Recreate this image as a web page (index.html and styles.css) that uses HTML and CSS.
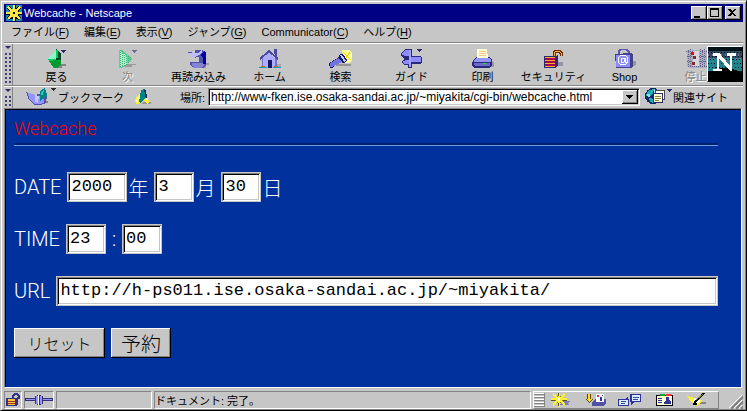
FILE: index.html
```
<!DOCTYPE html>
<html lang="ja">
<head>
  <meta charset="UTF-8">
  <title>Webcache - Netscape</title>
  <link rel="stylesheet" href="styles.css">
</head>
<body>
  <div class="window">
    <header class="titlebar">
      <svg class="app-icon" width="16" height="16" viewBox="0 0 16 16">
        <path fill="#188ca8" d="M0 0h16v16H0z"/>
        <path fill="#000" d="M5 5h8v9H4z"/>
        <path stroke="#000" stroke-width="3" d="M8 0v16M0 8h16M2 2l12 12M14 2L2 14"/>
        <path stroke="#ffe742" stroke-width="2" d="M8 0v16M0 8h16M2 2l12 12M14 2L2 14"/>
        <circle cx="8" cy="8" r="4" fill="none" stroke="#ffe742" stroke-width="1"/>
        <path fill="#000" d="M7 7h2v2H7z"/>
      </svg>
      <h1>Webcache - Netscape</h1>
      <div class="window-buttons">
        <button aria-label="最小化"><svg width="12" height="10"><path fill="#000" d="M2 8h6v2H2z"/></svg></button>
        <button aria-label="最大化"><svg width="12" height="10"><path d="M2 0h9v9H2zM3 2v6h7V2z" fill="#000" fill-rule="evenodd"/></svg></button>
        <button class="close" aria-label="閉じる"><svg width="12" height="10"><path fill="#000" d="M2 1h2l2 2 2-2h2L7 4.500l3 3.500H8L6 6 4 8H2l3-3.500z"/></svg></button>
      </div>
    </header>

    <nav class="menubar">
      <a href="#">ファイル(<u>F</u>)</a>
      <a href="#">編集(<u>E</u>)</a>
      <a href="#">表示(<u>V</u>)</a>
      <a href="#">ジャンプ(<u>G</u>)</a>
      <a href="#">Communicator(<u>C</u>)</a>
      <a href="#">ヘルプ(<u>H</u>)</a>
    </nav>

    <div class="toolbar">
      <div class="handle"></div>
      <div class="tools">
        <button class="tool">
          <svg viewBox="0 0 24 20">
            <path fill="#848484" d="M8 15h13v2H17v2H8z"/>
            <path fill="#00ce63" d="M11 1L2 10l9 9z"/>
            <path fill="#8cf7c6" d="M11 1L2 10h9z"/>
            <path fill="#004a29" d="M11 0l5 4v11l-5 4z"/>
            <path fill="#009c31" d="M12 11h4v4l-4 4H9l-5-7z"/>
            <path fill="#00ce63" d="M11 1h2v8h-2z"/>
            <path fill="#29296b" d="M16 1h5l-2 3h-1z"/>
          </svg>
          戻る
        </button>
        <button class="tool off">
          <svg viewBox="0 0 24 20">
            <path fill="#9c9c9c" d="M7 15h13v1h-4v2H7z"/>
            <path fill="#63ce9c" d="M3 1h3l11 9-11 9H3z"/>
            <path fill="#bde7ce" d="M4 2l7 5v9l-7 2z"/>
            <path stroke="#31b573" stroke-dasharray="1 1" fill="none" d="M4.500 1v18M6.500 2v16M8.500 4v13M10.500 5v11M12.500 7v7M14.500 8v4"/>
            <path fill="#6b6b94" d="M16 1h5l-2 3h-1z"/>
          </svg>
          次
        </button>
        <button class="tool">
          <svg viewBox="0 0 24 20">
            <path fill="#9c9ca5" d="M6 14h16v2h-3v3H6z"/>
            <path fill="#5252ad" d="M8 1h7l4 3v12l-3 3H6l-3-3v-3h9V8L6 9 1 3l7 1z"/>
            <path fill="#bdbdff" d="M1 4h10l4-3v3L7 9z"/>
            <path fill="#8484d6" d="M5 14h10l2 2-2 3H6z"/>
            <path fill="#0000a5" d="M13 6l4-4 2 2v11h-3V8z"/>
          </svg>
          再読み込み
        </button>
        <button class="tool">
          <svg viewBox="0 0 24 20">
            <path fill="#a5a5ad" d="M17 15h6v4h-8z"/>
            <path fill="#7373bd" d="M4 9h15v10H4z"/>
            <path fill="#adadff" d="M5 8l5-5 7 7v9H5z"/>
            <path fill="none" stroke="#4a4aa5" stroke-width="2" d="M2 10l9-8 9 8"/>
            <path fill="#4a4aa5" d="M16 0h3v8l-3-3z"/>
            <path fill="#18186b" d="M10 11h4v8h-4z"/>
            <path fill="#00a5ad" d="M1 18h8v1H1zM15 18h8v1h-8z"/>
            <path fill="#d65a29" d="M3 17h4v1H3zM16 17h4v1h-4z"/>
          </svg>
          ホーム
        </button>
        <button class="tool">
          <svg viewBox="0 0 24 20">
            <path fill="#ffff9c" d="M13 1h8l2 3v7l-3 3h-5z"/>
            <path stroke="#f7d600" d="M14 3l8 8M21 3l-6 9"/>
            <path fill="#949494" d="M8 15h14v2H6z"/>
            <path fill="#18186b" d="M0 14l9-5 2-4h3l4 6-2 3-6-1-7 6H1z"/>
            <path fill="#7373de" d="M1 14l9-5 3 4-10 5H1z"/>
            <path fill="#c6c6ff" d="M11 6h2l4 6-2 1z"/>
          </svg>
          検索
        </button>
        <button class="tool">
          <svg viewBox="0 0 24 20">
            <path fill="#29297b" d="M1 4l5-4h5v10H5L1 7zM9 0h3v19H8zM9 7h12l1 2v5l-2 1H9zM1 13l4-3h4v6H5z"/>
            <path fill="#8c8cff" d="M2 4l4-3h4v6H5L2 6zM11 8h10v5H11zM2 13l4-2h3v4H5z"/>
            <path fill="#a5a5ff" d="M9 1h2v17H9z"/>
            <path fill="#29296b" d="M17 0h5l-2 3h-1z"/>
          </svg>
          ガイド
        </button>
        <button class="tool">
          <svg viewBox="0 0 24 20">
            <path fill="#9494a5" d="M17 13h6v5H7z"/>
            <path fill="#29297b" d="M2 11l3-3h13l3 3v5l-3 3H3l-2-3z"/>
            <path fill="#9494ff" d="M3 11l2-2h13l2 2v2H3z"/>
            <path fill="#6b6bc6" d="M3 14h16v3H4z"/>
            <path fill="#ffffd6" d="M6 0h10l1 9H6z"/>
            <path stroke="#f7c68c" d="M8 2.500h7M8 4.500h7M8 6.500h7"/>
            <path fill="#00ff00" d="M12 14h3v1h-3z"/>
          </svg>
          印刷
        </button>
        <button class="tool">
          <svg viewBox="0 0 24 20">
            <path fill="#9494a5" d="M14 13h7v4H8z"/>
            <path fill="none" stroke="#732900" stroke-width="3" d="M12 8V4l2-2h3l2 2v3"/>
            <path fill="none" stroke="#f7b531" d="M12 8V4l2-2h3l2 2v3"/>
            <path fill="#29297b" d="M2 7h11l3-1v11l-3 2H2z"/>
            <path fill="#ffad21" d="M3 8h10v10H3z"/>
            <path fill="#a50052" d="M3 9h10v2H3zM3 12h10v2H3zM3 15h10v2H3z"/>
          </svg>
          セキュリティ
        </button>
        <button class="tool">
          <svg viewBox="0 0 24 20">
            <path fill="#9494a5" d="M18 12h5v4l-4 2H8z"/>
            <path fill="none" stroke="#5a5aad" stroke-width="2" d="M6 5V2l2-2h5l3 3v3"/>
            <path fill="#42428c" d="M2 5l15-1 3 1v13l-3 1H3z"/>
            <path fill="#8c8cff" d="M3 6h14v12H3z"/>
            <circle cx="10" cy="11" r="5" fill="none" stroke="#fff" stroke-width="1"/>
            <path fill="none" stroke="#fff" d="M12 9H9L8 11v2h3l1-4v4h2"/>
          </svg>
          Shop
        </button>
        <button class="tool off">
          <svg viewBox="0 0 24 20">
            <path fill="#adadbd" d="M3 1h20v18H5L3 16z"/>
            <path fill="none" stroke="#63638c" stroke-dasharray="1 1" d="M4.500 1v18M6.500 0v18M16.500 0v18M18.500 1v18M20.500 0v18"/>
            <path stroke="#63638c" stroke-dasharray="1 1" d="M2 2.500h21M3 7.500h20M3 12.500h20M4 17.500h19"/>
            <path fill="#d6d6de" d="M9 2h6v15H9z"/>
            <path fill="#ff0000" d="M7 3h3v3H7z"/>
            <path fill="#842929" d="M9 7h3v3H9zM8 13h3v3H8z"/>
          </svg>
          停止
        </button>
      </div>
      <svg class="logo" viewBox="0 0 32 32">
        <path fill="#001018" d="M0 0h32v32H0z"/>
        <path fill="#314a63" d="M0 4h32v8H0z"/>
        <path fill="#21848c" d="M0 10h32v13H0z"/>
        <path stroke="#001018" stroke-dasharray="1 2" d="M0 2.500h32M0 5.500h32M1 8.500h31M2 11.500h30M0 15.500h32M1 19.500h31"/>
        <path stroke="#8c6b8c" stroke-dasharray="1 3" d="M0 7.500h32M2 10.500h30M1 13.500h31"/>
        <path fill="#000" d="M0 32v-8l7-2 5-2h9l6 2 5 3v7z"/>
        <path fill="#fff" d="M5 6h6l10 12V8h-3V6h8v2h-3v15h-2L10 10v11h3v2H5v-2h3V8H5z"/>
      </svg>
    </div>

    <div class="toolbar location">
      <div class="handle"></div>
      <button class="quick bookmarks">
        <svg width="32" height="18" viewBox="0 0 32 18">
          <path fill="#848484" d="M10 13h12v2h-6v2h-6z"/>
          <path fill="#5252ad" d="M0 4l9 3 9-3 3 4-1 7-6 2H9L3 12z"/>
          <path fill="#9494ff" d="M1 4l8 3 4 1 5 3v4l-5 1H9L4 12z"/>
          <path fill="#c6c6ff" d="M9 7l4 1-1 7-3-1z"/>
          <path fill="#008484" d="M14 3l5-3 1 3 1 4-4 4-3 2z"/>
          <path fill="#31c6c6" d="M15 4l3-2-2 7z"/>
          <path fill="#292929" d="M25 0h5l-2 3h-1z"/>
        </svg>
        ブックマーク
      </button>
      <svg class="drag" width="18" height="16" viewBox="0 0 18 16">
        <path fill="#949494" d="M9 13h8v2H8z"/>
        <path fill="#ffef31" d="M1 11l3-5 6-5 4 9 2 3-3 2-5-5-3 5H2z"/>
        <path fill="#008484" d="M7 1l4-1 1 8-5 6-2-1z"/>
        <path fill="#ffffc6" d="M3 10l3-4-2 7H2zM11 6l3 5-1 1z"/>
        <path fill="#00296b" d="M10 1h2l1 7-1 2z"/>
      </svg>
      <label for="address">場所:</label>
      <div class="combo">
        <input id="address" type="text" value="http://www-fken.ise.osaka-sandai.ac.jp/~miyakita/cgi-bin/webcache.html">
        <button aria-label="履歴"><svg width="8" height="4"><path fill="#000" d="M0 0h7L4 4H3z"/></svg></button>
      </div>
      <button class="quick related">
        <svg width="28" height="18" viewBox="0 0 28 18">
          <circle cx="8" cy="8" r="8" fill="#10296b"/>
          <path fill="#21adb5" d="M4 2l5-1-1 4-4 4-3-1 1-4zM4 10l5 1-1 4-3-1z"/>
          <path fill="#94deef" d="M9 1l4 2-4 2zM2 6h3v3H3z"/>
          <path fill="#fff" stroke="#4a4a4a" d="M10.500 2.500h9v9h-9z"/>
          <path fill="#ffffce" stroke="#29296b" d="M8.500 5.500h9v9h-9z"/>
          <path fill="#84844a" d="M10 8h6v1h-6zM10 10h6v1h-6zM10 12h4v1h-4z"/>
          <path fill="#29296b" d="M22 1h5l-2 3h-1z"/>
        </svg>
        関連サイト
      </button>
    </div>

    <main class="page">
      <h2>Webcache</h2>
      <hr>
      <form>
        <div class="row">
          <label for="year">DATE</label>
          <input class="year" id="year" type="text" value="2000"><label for="year">年</label>
          <input class="two" id="month" type="text" value="3"><label for="month">月</label>
          <input class="two" id="day" type="text" value="30"><label for="day">日</label>
        </div>
        <div class="row">
          <label for="hour">TIME</label>
          <input class="two" id="hour" type="text" value="23">
          <label class="colon" for="minute">:</label>
          <input class="two" id="minute" type="text" value="00">
        </div>
        <div class="row">
          <label for="url">URL</label>
          <input class="url" id="url" type="text" value="http://h-ps011.ise.osaka-sandai.ac.jp/~miyakita/">
        </div>
        <div class="row">
          <button class="reset" type="reset">リセット</button>
          <button class="reserve" type="button">予約</button>
        </div>
      </form>
    </main>

    <footer class="statusbar">
      <div class="cell lock">
        <svg width="16" height="14" viewBox="0 0 16 14">
          <path fill="none" stroke="#31318c" stroke-width="2" d="M8 5V3l2-2h2l2 2v3"/>
          <path fill="#31318c" d="M1 5h10l2-1v8l-2 1H1z"/>
          <path fill="#ffc631" d="M3 6h7v6H3z"/>
          <path fill="#a53131" d="M3 8h7v1H3zM3 10h7v1H3z"/>
        </svg>
      </div>
      <div class="cell plug">
        <svg width="28" height="12" viewBox="0 0 28 12">
          <path fill="#31317b" d="M0 4h10v3H0zM18 4h10v3H18zM10 2h2V1h4v1h2v8h-2v1h-4v-1h-2z"/>
          <path fill="#9494ff" d="M1 5h9v1H1zM18 5h9v1h-9zM11 2h2v8h-2zM15 2h2v8h-2z"/>
          <path fill="#fff" d="M13 1h1v10h-1z"/>
        </svg>
      </div>
      <div class="cell progress"></div>
      <div class="cell message">ドキュメント: 完了。</div>
      <div class="components">
        <div class="lines"></div>
        <button aria-label="Navigator">
          <svg width="24" height="14" viewBox="0 0 24 14">
            <path fill="#7b7bc6" d="M12 8h9l-3 2 1 2h-9z"/>
            <path fill="none" stroke="#84841a" d="M5.500 3.500h7v6h-7z"/>
            <path stroke="#ffef31" stroke-width="2" d="M9 0v14M1 6h16M3 1l12 11M15 1L3 12"/>
            <path fill="#5a5a00" d="M8 0h1v3H8zM1 7h4v1H1zM13 7h4v1h-4zM8 10h1v3H8z"/>
            <path fill="#fff" d="M8 5h2v3H8z"/>
          </svg>
        </button>
        <button aria-label="受信箱">
          <svg width="24" height="14" viewBox="0 0 24 14">
            <path fill="#5a4a00" d="M3 1h4v5h2L5 10 1 6h2z"/>
            <path fill="#ffde21" d="M4 1h2v5h2L5 9 2 6h2z"/>
            <path fill="#5252a5" d="M8 9l4-3h10v5l-3 2H8z"/>
            <path fill="#fff" d="M12 1h8v8h-8z"/>
            <path fill="#d63131" d="M13 2h2v2h-2z"/>
            <path fill="#3131a5" d="M16 4h2v4h-2zM18 2h1v1h-1z"/>
          </svg>
        </button>
        <button aria-label="ニュース">
          <svg width="24" height="14" viewBox="0 0 24 14">
            <path fill="#31319c" d="M12 1h11v8h-7l-3 3V9h-1zM0 6h7l3-3v3h1v7H0z"/>
            <path fill="#d6efff" d="M14 2h8v6h-8zM1 7h9v5H1z"/>
            <path fill="#4242a5" d="M15 4h6v1h-6zM15 6h5v1h-5zM3 8h5v1H3zM3 10h4v1H3z"/>
          </svg>
        </button>
        <button aria-label="アドレス帳">
          <svg width="24" height="14" viewBox="0 0 24 14">
            <path fill="#000" d="M4 2h17v11H4z"/>
            <path fill="#ffffd6" d="M5 3h15v9H5z"/>
            <path fill="#00a531" d="M8 1h5v2H8z"/>
            <path fill="#ff3131" d="M14 1h5v2h-5z"/>
            <path fill="#31319c" d="M14 4h3v3h-3zM12 9l2-2h3l2 2v2h-7zM6 5h4v1H6zM6 7h4v1H6zM6 9h4v1H6z"/>
          </svg>
        </button>
        <button aria-label="コンポーザ">
          <svg width="24" height="14" viewBox="0 0 24 14">
            <path fill="#848484" d="M14 9h6v2h-7z"/>
            <path fill="#ffef31" d="M1 3l8 2 8 3-6 5-6-4z"/>
            <path fill="#fff" d="M8 5l7 3-4 3-4-2z"/>
            <path stroke="#000" stroke-width="2" d="M8 10L18 0M7 11h4"/>
            <path stroke="#8c9431" d="M10 7l7-6"/>
          </svg>
        </button>
      </div>
      <svg class="grip" width="14" height="14" viewBox="0 0 14 14">
        <path stroke="#fff" d="M0 13L13 0M5 13l8-8M10 13l3-3"/>
        <path stroke="#848484" stroke-width="2" d="M2 14L14 2M7 14l7-7M12 14l2-2"/>
      </svg>
    </footer>
  </div>
</body>
</html>
```

FILE: styles.css
```
* {
  box-sizing: border-box;
}

body {
  margin: 0;
  background: #c6c6c6;
  color: #000;
  font-family: "Liberation Sans", "Noto Sans CJK JP", sans-serif;
  font-size: 12px;
}

button, input {
  font: inherit;
  color: inherit;
  margin: 0;
  padding: 0;
  border: none;
  border-radius: 0;
  outline: none;
}

svg {
  display: block;
  flex: none;
  shape-rendering: crispEdges;
}

/* window frame */
.window {
  display: flex;
  flex-direction: column;
  min-height: 100vh;
  padding: 2px 2px 0 2px;
  border: 1px solid #000;
  border-top-color: #c6c6c6;
  border-left-color: #c6c6c6;
  box-shadow: inset 1px 1px #fff, inset -1px -1px #848484;
}

.window > * {
  margin: 0 1px;
}

.titlebar {
  display: flex;
  align-items: center;
  height: 18px;
  margin-top: 1px;
  padding: 0 2px;
  background: #000084;
  color: #fff;
}

.titlebar h1 {
  flex: 1;
  margin: 0 0 0 2px;
  font-size: 11px;
  font-weight: normal;
}

.window-buttons {
  display: flex;
}

.window-buttons button {
  width: 16px;
  height: 14px;
  padding: 2px 1px;
}

.window-buttons .close {
  margin-left: 2px;
}

.window-buttons button, .combo button {
  background: #c6c6c6;
  box-shadow: inset -1px -1px #000, inset 1px 1px #fff, inset -2px -2px #848484;
}

.menubar {
  display: flex;
  align-items: center;
  gap: 15px;
  height: 20px;
  padding: 0 7px;
  font-size: 11px;
  line-height: 18px;
}

.menubar a {
  color: #000;
  text-decoration: none;
  white-space: nowrap;
}

.menubar u {
  text-underline-offset: 2px;
}

/* toolbars */
.toolbar {
  display: flex;
  height: 44px;
  border-top: 1px solid #848484;
  border-bottom: 1px solid #848484;
  box-shadow: inset 0 1px #fff;
}

.toolbar.location {
  align-items: center;
  height: 22px;
  border-top: none;
  border-bottom: none;
  font-size: 11px;
}

.handle {
  align-self: stretch;
  flex: none;
  width: 9px;
  margin-top: 1px;
  border-right: 1px solid #848484;
  background: radial-gradient(circle, #42427b 1px, transparent 1px) 0 8px / 4px 4px;
  background-clip: content-box;
  padding: 7px 1px 2px 1px;
  position: relative;
}

.handle::before {
  content: "";
  position: absolute;
  top: 2px;
  left: 1px;
  border: 3px solid transparent;
  border-top: 3px solid #29296b;
  border-bottom: none;
}

.tools {
  display: flex;
  flex: 1;
  min-width: 0;
  overflow: hidden;
  padding-left: 8px;
}

.tool {
  flex: none;
  width: 71px;
  padding-top: 4px;
  background: none;
  line-height: 14px;
  text-align: center;
  white-space: nowrap;
  font-size: 11px;
}

.tool svg {
  width: 24px;
  height: 20px;
  margin: 0 auto 1px;
}

.tool.off {
  color: #848484;
  text-shadow: 1px 1px #fff;
}

.logo {
  width: 36px;
  height: 36px;
  margin-top: 3px;
  border: 1px solid #fff;
  border-right-color: #000;
  border-bottom-color: #000;
}

.quick {
  display: flex;
  align-items: center;
  background: none;
  white-space: nowrap;
}

.bookmarks {
  margin-left: 13px;
}

.drag {
  margin: 0 28px 0 10px;
}

.combo {
  display: flex;
  flex: 1;
  min-width: 0;
  height: 18px;
  margin: 0 5px 0 3px;
  padding: 1px;
  background: #fff;
  border: 1px solid #848484;
  border-right-color: #fff;
  border-bottom-color: #fff;
  box-shadow: inset 1px 1px #000, inset -1px -1px #c6c6c6;
}

.combo input {
  flex: 1;
  min-width: 0;
  padding-left: 1px;
  background: none;
  font-size: 12px;
}

.combo button {
  display: flex;
  align-items: center;
  justify-content: center;
  width: 16px;
}

.related {
  margin-right: 15px;
}

/* page */
.window > .page {
  flex: 1;
  margin-right: 2px;
  padding: 8px 23px 28px 9px;
  background: #00319c;
  color: #fff;
  border: 1px solid #848484;
  border-right-color: #fff;
  border-bottom-color: #fff;
  box-shadow: inset 1px 1px #000;
  font-family: Roboto, "Noto Sans CJK JP", sans-serif;
  font-size: 20px;
  font-weight: 300;
}

.page h2 {
  margin: 0;
  color: #f00;
  font-size: 18px;
  font-weight: 300;
  line-height: 24px;
}

.page hr {
  height: 3px;
  margin: 2px 0 26px;
  border: none;
  border-top: 2px solid #002173;
  border-bottom: 1px solid #739cde;
}

.row {
  display: flex;
  align-items: center;
  gap: 6px;
  height: 30px;
  margin-bottom: 22px;
}

.row:last-child {
  margin-bottom: 0;
}

.row input + label {
  margin-left: -5px;
}

.row input + .colon {
  width: 4px;
  margin-left: 0;
}

.row input {
  height: 30px;
  padding: 0 3px 2px;
  background: #fff;
  color: #000;
  border: 1px solid #c6c6c6;
  box-shadow: inset 1px 1px #848484, inset -1px -1px #fff, inset 2px 2px #000, inset -2px -2px #c6c6c6;
  font-family: "Liberation Mono", monospace;
  font-size: 17px;
}

.year {
  width: 60px;
}

.two {
  width: 40px;
}

.url {
  flex: 1;
  min-width: 0;
}

.row button {
  height: 30px;
  background: #c6c6c6;
  color: #000;
  box-shadow: inset -1px -1px #000, inset 1px 1px #fff, inset -2px -2px #848484;
}

.reset {
  width: 91px;
  font-size: 16px;
}

.reserve {
  width: 60px;
}

/* status bar */
.statusbar {
  display: flex;
  gap: 2px;
  height: 22px;
  padding: 3px 0 1px;
}

.cell {
  display: flex;
  align-items: center;
  justify-content: center;
  border: 1px solid #848484;
  border-right-color: #fff;
  border-bottom-color: #fff;
}

.lock {
  width: 18px;
}

.plug {
  width: 30px;
}

.progress {
  width: 96px;
}

.message {
  flex: 1;
  justify-content: flex-start;
  font-size: 11px;
}

.components {
  display: flex;
  align-items: center;
  border: 1px solid #fff;
  border-right-color: #848484;
  border-bottom-color: #848484;
  padding-right: 3px;
}

.components button {
  width: 34px;
  background: none;
}

.components button svg {
  margin: 0 auto;
}

.lines {
  width: 11px;
  height: 14px;
  border-right: 1px solid #848484;
  background: repeating-linear-gradient(#fff 0 1px, #848484 1px 2px, #c6c6c6 2px 3px);
}

.grip {
  align-self: flex-end;
  margin-left: 8px;
}
```
